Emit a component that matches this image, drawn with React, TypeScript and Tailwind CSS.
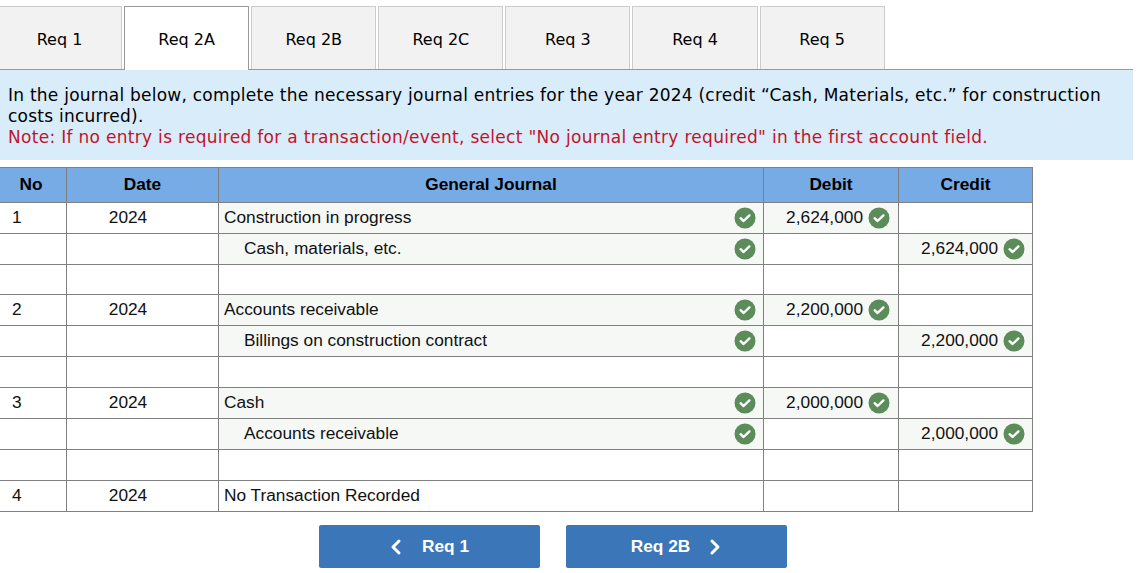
import { ChevronLeft, ChevronRight } from "lucide-react";

const tabs = ["Req 1", "Req 2A", "Req 2B", "Req 2C", "Req 3", "Req 4", "Req 5"];

type Row = {
  no?: string;
  date?: string;
  account?: string;
  indent?: boolean;
  debit?: string;
  credit?: string;
  ok?: boolean;
};

const rows: Row[] = [
  { no: "1", date: "2024", account: "Construction in progress", debit: "2,624,000", ok: true },
  { account: "Cash, materials, etc.", indent: true, credit: "2,624,000", ok: true },
  {},
  { no: "2", date: "2024", account: "Accounts receivable", debit: "2,200,000", ok: true },
  { account: "Billings on construction contract", indent: true, credit: "2,200,000", ok: true },
  {},
  { no: "3", date: "2024", account: "Cash", debit: "2,000,000", ok: true },
  { account: "Accounts receivable", indent: true, credit: "2,000,000", ok: true },
  {},
  { no: "4", date: "2024", account: "No Transaction Recorded" },
];

function Check() {
  return (
    <svg width="22" height="22" viewBox="0 0 22 22" className="shrink-0">
      <circle cx="11" cy="11" r="10.5" fill="#5b8c5a" />
      <path d="M6.6 11.2l3 2.8 5.8-5.6" fill="none" stroke="#fff" strokeWidth="2.4" strokeLinecap="round" strokeLinejoin="round" />
    </svg>
  );
}

function Amount({ value, last }: { value?: string; last?: boolean }) {
  if (!value) return <td className="border border-[#808080] p-0" />;
  return (
    <td className="border border-[#808080] p-0 bg-[#f6f8f5]">
      <div className={last ? "flex items-center justify-end gap-[5px] pr-[7px]" : "flex items-center justify-end gap-[5px] pr-[8px]"}>
        <span>{value}</span>
        <Check />
      </div>
    </td>
  );
}

export default function App() {
  return (
    <div className="w-[1148px] h-[573px] overflow-hidden bg-white pt-[6px] text-black">
      <div className="flex w-[1133px] h-[63px] font-['DejaVu_Sans',sans-serif] text-[16px] border-b border-[#999] box-content">
        <div className="flex gap-[2px] -ml-[3px]">
          {tabs.map((t, i) => (
            <div
              key={t}
              className={
                i === 1
                  ? "w-[125.1px] h-[64px] pt-[3px] flex items-center justify-center bg-white border border-b-0 border-[#999] relative z-10"
                  : "w-[125.1px] h-[63px] pt-[3px] flex items-center justify-center bg-[#f2f2f2] border border-b-0 border-[#ccc]"
              }
            >
              {t}
            </div>
          ))}
        </div>
      </div>

      <div className="w-[1133px] h-[90px] bg-[#d9ecfa] pt-[15px] pl-[8px] pr-[20px] font-['DejaVu_Sans',sans-serif] text-[17px] leading-[21px]">
        <p className="tracking-[0.24px]">In the journal below, complete the necessary journal entries for the year 2024 (credit “Cash, Materials, etc.” for construction costs incurred).</p>
        <p className="tracking-[0.3px] text-[#c0142c]">Note: If no entry is required for a transaction/event, select "No journal entry required" in the first account field.</p>
      </div>

      <table className="mt-[7px] -ml-px w-[1033px] table-fixed border-collapse font-['Liberation_Sans',sans-serif] text-[17.3px] text-[#111]">
        <colgroup>
          <col className="w-[67px]" />
          <col className="w-[152px]" />
          <col className="w-[545px]" />
          <col className="w-[135px]" />
          <col className="w-[134px]" />
        </colgroup>
        <thead>
          <tr className="h-[35px] bg-[#77abe5] font-bold text-black">
            <th className="border border-[#808080] p-0 pr-[4px] font-bold">No</th>
            <th className="border border-[#808080] p-0 font-bold">Date</th>
            <th className="border border-[#808080] p-0 font-bold">General Journal</th>
            <th className="border border-[#808080] p-0 font-bold">Debit</th>
            <th className="border border-[#808080] p-0 font-bold">Credit</th>
          </tr>
        </thead>
        <tbody>
          {rows.map((r, i) => (
            <tr key={i} className={i === 2 ? "h-[30px]" : "h-[31px]"}>
              <td className="border border-[#808080] p-0 pl-[12px]">{r.no}</td>
              <td className="border border-[#808080] p-0 pr-[29px] text-center">{r.date}</td>
              <td className={r.ok ? "border border-[#808080] p-0 bg-[#f6f8f5]" : "border border-[#808080] p-0"}>
                {r.account && (
                  <div className="flex items-center justify-between pr-[7px]">
                    <span className={r.indent ? "pl-[25px]" : "pl-[5px]"}>{r.account}</span>
                    {r.ok && <Check />}
                  </div>
                )}
              </td>
              <Amount value={r.debit} />
              <Amount value={r.credit} last />
            </tr>
          ))}
        </tbody>
      </table>

      <div className="mt-[13px] flex gap-[26px] pl-[319px] font-['Liberation_Sans',sans-serif] text-[17.3px] font-bold text-white">
        <div className="w-[221px] h-[43px] pr-[6px] flex items-center justify-center gap-[14px] rounded-[2px] bg-[#3b76b8]">
          <ChevronLeft size={24} strokeWidth={3} />
          <span>Req 1</span>
        </div>
        <div className="w-[221px] h-[43px] pl-[5px] flex items-center justify-center gap-[13px] rounded-[2px] bg-[#3b76b8]">
          <span>Req 2B</span>
          <ChevronRight size={24} strokeWidth={3} />
        </div>
      </div>
    </div>
  );
}
